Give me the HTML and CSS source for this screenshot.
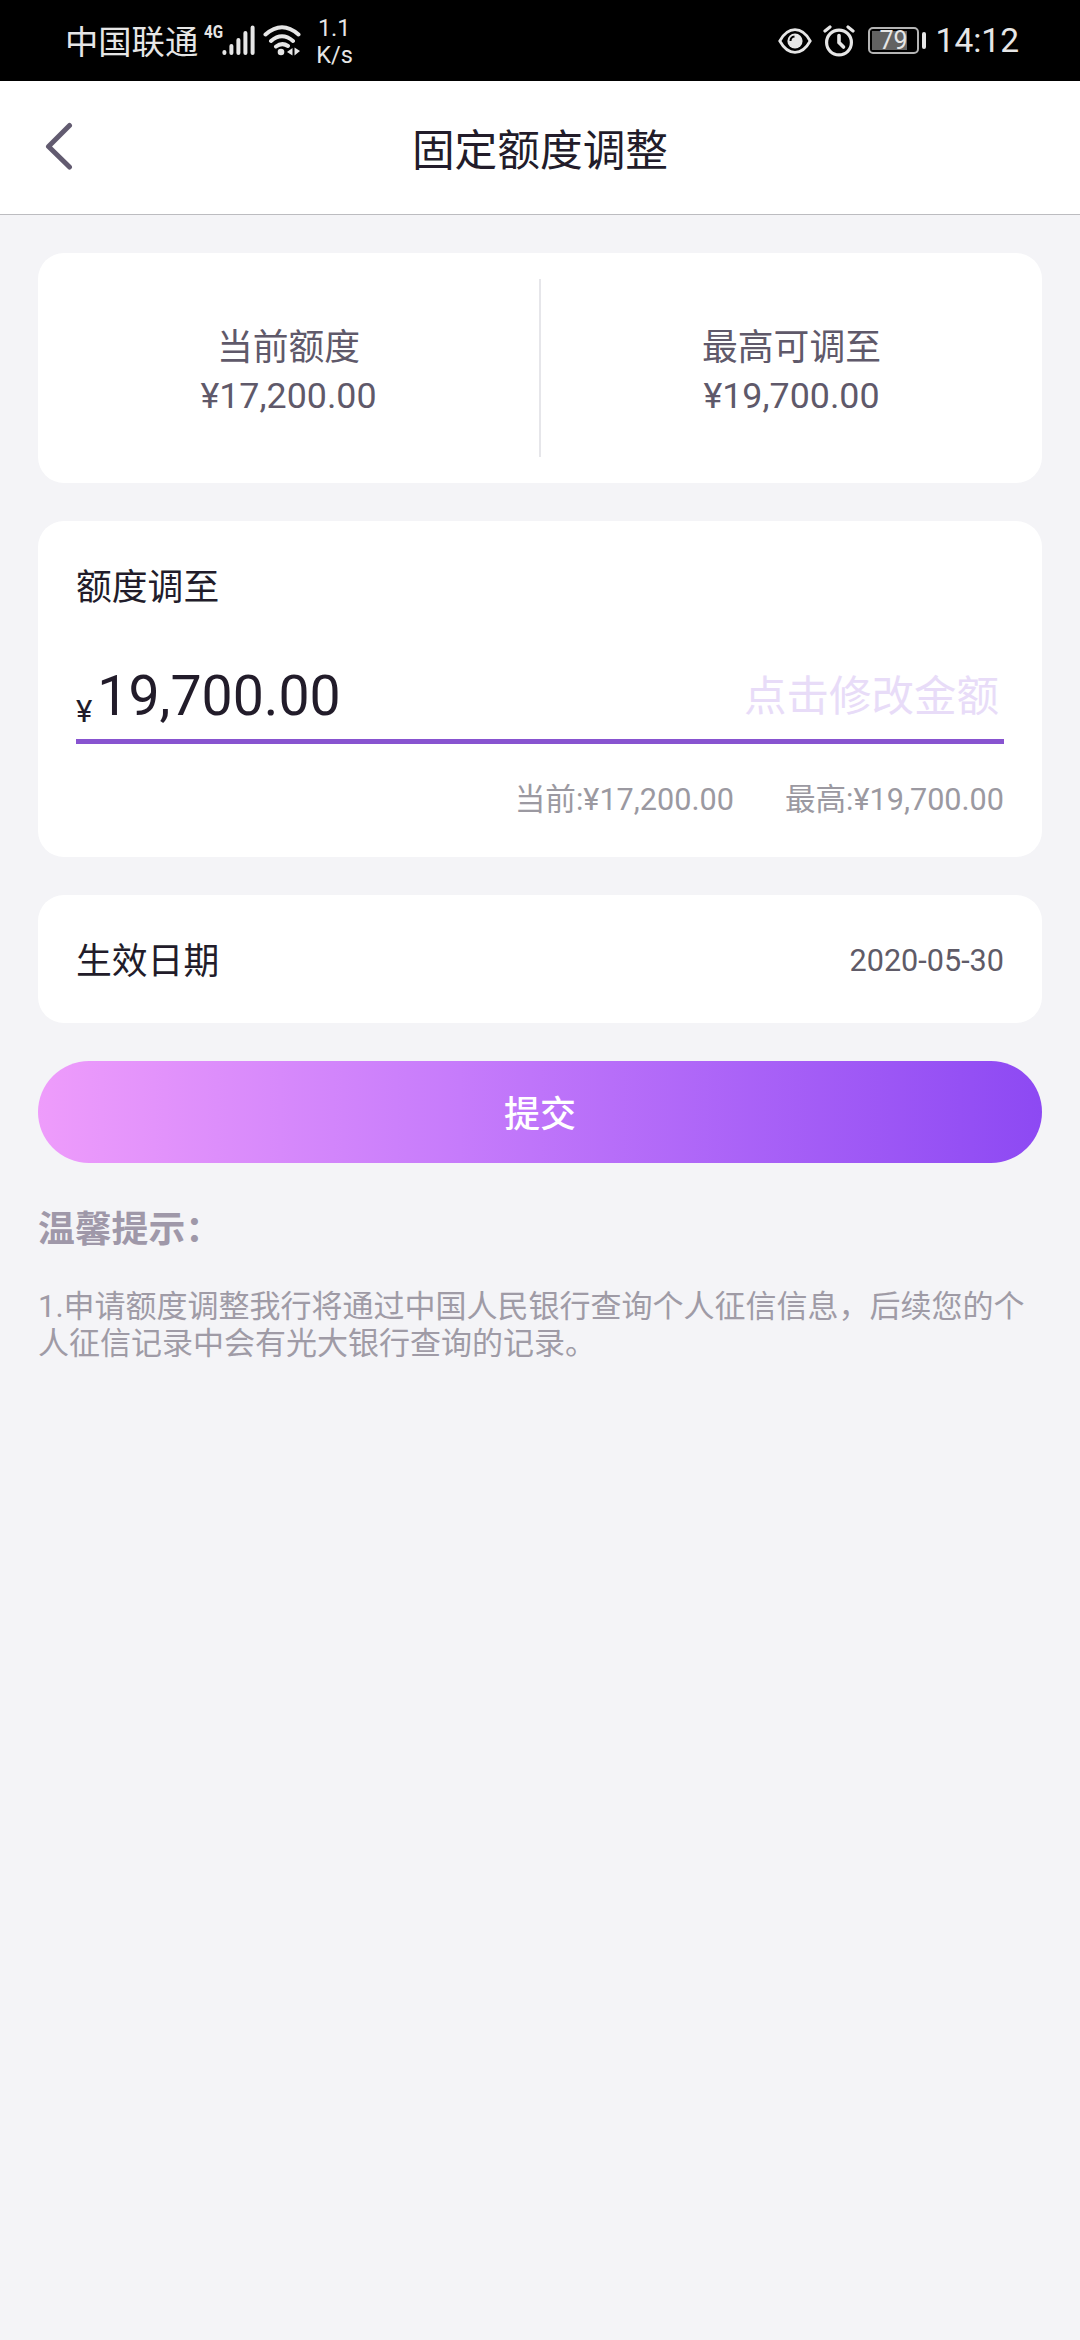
FILE: index.html
```html
<!DOCTYPE html>
<html lang="zh-CN">
<head>
<meta charset="utf-8">
<title>固定额度调整</title>
<link rel="stylesheet" href="styles.css">
</head>
<body>
<div class="status">
  <span class="carrier">中国联通</span>
  <span class="network">4G</span>
  <svg class="signal" width="33" height="31" viewBox="0 0 33 31" stroke="#e6e6e6" stroke-width="4" stroke-linecap="round"><path d="M2.4 27v1M9.4 21v7M16.4 15v13M23.4 8v20M30.6 2.5v25.5"/></svg>
  <svg class="wifi" width="38" height="31" viewBox="0 0 38 31" fill="none" stroke="#e6e6e6" stroke-width="4" stroke-linecap="round"><path d="M2.500 9.500Q19-5 35.500 9.500M8 16Q19 6.500 30 16M13 21.500Q19 17 25 21"/><circle cx="18" cy="27" r="3.300" fill="#e6e6e6" stroke="none"/><path d="M24 27l5.500-4v7.500zM31.500 22.500v8l5.500-4.500z" fill="#e6e6e6" stroke="none"/></svg>
  <span class="speed"><span>1.1</span><span>K/s</span></span>
  <svg class="eye" width="34" height="26" viewBox="0 0 34 26"><path d="M1.800 13Q8 1.700 17 1.700T32.200 13Q26 24.300 17 24.300T1.800 13z" fill="none" stroke="#e6e6e6" stroke-width="2.800"/><circle cx="17" cy="13" r="7.600" fill="#e6e6e6"/><path d="M12.500 13Q12.500 9 16.500 8.500" stroke="#000" stroke-width="2" fill="none"/></svg>
  <svg class="alarm" width="32" height="32" viewBox="0 0 32 32" fill="none" stroke="#e6e6e6" stroke-width="3.200" stroke-linecap="round"><circle cx="16" cy="17.500" r="12.400"/><path d="M16 10.500v7l4.500 4.500" stroke-width="3.600"/><path d="M2 6l5-4M30 6l-5-4"/></svg>
  <span class="battery"><span class="battery-body"><span class="battery-level">79</span></span><span class="battery-tip"></span></span>
  <span class="clock">14:12</span>
</div>
<header class="header">
  <svg class="back" width="32" height="50" viewBox="0 0 32 50" fill="none" stroke="#625b70" stroke-width="5" stroke-linecap="round" stroke-linejoin="round"><path d="M28.500 3.500L7.500 24.500L28.500 45"/></svg>
  <h1 class="title">固定额度调整</h1>
</header>
<main class="content">
  <section class="card summary">
    <div class="summary-item"><span>当前额度</span><span>¥17,200.00</span></div>
    <div class="divider"></div>
    <div class="summary-item"><span>最高可调至</span><span>¥19,700.00</span></div>
  </section>
  <section class="card adjust">
    <h2 class="label">额度调至</h2>
    <div class="amount-row">
      <span class="currency">¥</span><span class="amount">19,700.00</span><span class="hint">点击修改金额</span>
    </div>
    <div class="limits"><span>当前:¥17,200.00</span><span>最高:¥19,700.00</span></div>
  </section>
  <section class="card date-row">
    <h2 class="label">生效日期</h2>
    <span class="date">2020-05-30</span>
  </section>
  <button class="submit">提交</button>
  <h3 class="tips-title">温馨提示：</h3>
  <p class="tips">1.申请额度调整我行将通过中国人民银行查询个人征信信息，后续您的个人征信记录中会有光大银行查询的记录。</p>
</main>
</body>
</html>
```

FILE: styles.css
```css
* { box-sizing: border-box; }

body {
  margin: 0;
  width: 1080px;
  min-height: 2340px;
  background: #f4f4f7;
  color: #221c2a;
  font-family: Roboto, "Noto Sans CJK SC", sans-serif;
}

h1, h2, h3, p { margin: 0; font-weight: 400; }

svg { flex: none; }

.status {
  height: 81px;
  padding: 0 61px 0 65px;
  display: flex;
  align-items: center;
  background: #000;
  color: #e6e6e6;
}
.carrier { padding-top: 5px; font-size: 33.3px; line-height: 40px; white-space: nowrap; }
.network {
  width: 20px;
  margin: 0 0 17px 6px;
  font: 700 19px/18px Roboto, sans-serif;
  transform: scaleX(.8);
  transform-origin: left;
}
.signal { margin-left: -2px; }
.wifi { margin-left: 8px; }
.speed {
  width: 36px;
  padding-top: 2px;
  margin-left: 15px;
  display: flex;
  flex-direction: column;
  text-align: center;
  font-size: 23.5px;
  line-height: 27px;
}
.eye { margin-left: auto; }
.alarm { margin-left: 11px; }
.battery { margin-left: 13px; display: flex; align-items: center; gap: 3px; }
.battery-body {
  width: 51px;
  height: 27px;
  padding: 2px;
  border: 2px solid #b4b4b4;
  border-radius: 5px;
}
.battery-level {
  width: 35px;
  height: 19px;
  display: block;
  padding-left: 8px;
  background: #626262;
  font-size: 25px;
  line-height: 20px;
}
.battery-tip { width: 4px; height: 17px; border-radius: 2px; background: #e6e6e6; }
.clock { margin-left: 10px; padding-top: 1px; font-size: 33.5px; line-height: 40px; }

.header {
  height: 134px;
  padding: 0 41px;
  display: grid;
  grid-template-columns: 32px 1fr 32px;
  align-items: center;
  background: #fff;
  border-bottom: 1px solid #bcbcc0;
}
.back { margin-bottom: 1px; }
.title { padding-top: 6px; font-size: 42.7px; line-height: 60px; text-align: center; }

.content {
  padding: 38px;
  display: flex;
  flex-direction: column;
  gap: 38px;
}
.card { background: #fff; border-radius: 26px; }

.summary {
  height: 230px;
  padding: 26px 0;
  display: flex;
}
.summary-item {
  flex: 1;
  padding-top: 7px;
  display: flex;
  flex-direction: column;
  justify-content: center;
  text-align: center;
  color: #5f596a;
  font-size: 35.8px;
  line-height: 48px;
}
.divider { width: 2px; background: #e6e6ea; }

.label { font-size: 35.8px; line-height: 50px; }

.adjust { height: 336px; padding: 42px 38px 0; }
.amount-row {
  height: 95px;
  margin-top: 36px;
  display: flex;
  align-items: flex-end;
  border-bottom: 5px solid #8854d0;
}
.currency { font-size: 31px; line-height: 55px; }
.amount { margin-left: 5px; font-size: 55.4px; line-height: 85px; }
.hint { margin-left: auto; padding-right: 5px; font-size: 42.5px; line-height: 85px; color: #e8dcf8; }
.limits {
  margin-top: 34px;
  display: flex;
  justify-content: flex-end;
  gap: 51px;
  color: #9b99a1;
  font-size: 30.6px;
  line-height: 44px;
}

.date-row {
  height: 128px;
  padding: 5px 38px 0;
  display: flex;
  align-items: center;
  justify-content: space-between;
}
.date { padding-bottom: 3px; color: #5f5b68; font-size: 30.6px; }

.submit {
  height: 102px;
  padding: 6px 0 0;
  border: 0;
  border-radius: 51px;
  background: linear-gradient(90deg, #ee9cfb, #c67bfb 42%, #8d49f3);
  color: #fff;
  font: 500 36px/50px Roboto, "Noto Sans CJK SC", sans-serif;
}

.tips-title { padding-top: 3px; color: #9f98a9; font-size: 36.8px; line-height: 52px; font-weight: 700; }
.tips { margin-top: -6px; color: #9f9ba6; font-size: 31px; line-height: 37px; }
```
